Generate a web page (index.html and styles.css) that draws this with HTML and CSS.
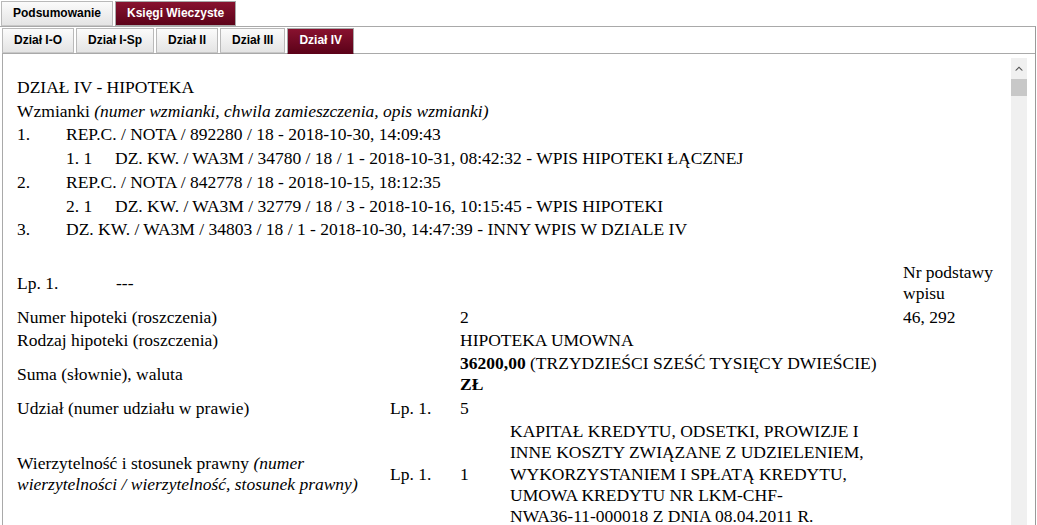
FILE: index.html
```html
<!DOCTYPE html>
<html lang="pl">
<head>
<meta charset="utf-8">
<title>Księgi Wieczyste - Dział IV</title>
<link rel="stylesheet" href="styles.css">
</head>
<body>
<div class="page">
  <div class="tabs tabs-top">
    <div class="tab">Podsumowanie</div>
    <div class="tab active">Księgi Wieczyste</div>
  </div>
  <div class="outer">
    <div class="tabs tabs-sub">
      <div class="tab">Dział I-O</div>
      <div class="tab">Dział I-Sp</div>
      <div class="tab">Dział II</div>
      <div class="tab">Dział III</div>
      <div class="tab active">Dział IV</div>
    </div>
    <div class="inner">
      <div class="content">
        <div class="row title">DZIAŁ IV - HIPOTEKA</div>
        <div class="row">Wzmianki <i>(numer wzmianki, chwila zamieszczenia, opis wzmianki)</i></div>
        <div class="wzm">
          <div class="n1">1.</div><div class="t1">REP.C. / NOTA / 892280 / 18 - 2018-10-30, 14:09:43</div>
          <div class="n2">1. 1</div><div class="t2">DZ. KW. / WA3M / 34780 / 18 / 1 - 2018-10-31, 08:42:32 - WPIS HIPOTEKI ŁĄCZNEJ</div>
          <div class="n1">2.</div><div class="t1">REP.C. / NOTA / 842778 / 18 - 2018-10-15, 18:12:35</div>
          <div class="n2">2. 1</div><div class="t2">DZ. KW. / WA3M / 32779 / 18 / 3 - 2018-10-16, 10:15:45 - WPIS HIPOTEKI</div>
          <div class="n1">3.</div><div class="t1">DZ. KW. / WA3M / 34803 / 18 / 1 - 2018-10-30, 14:47:39 - INNY WPIS W DZIALE IV</div>
        </div>

        <div class="hip">
          <div class="c-lp"><span class="lp-label">Lp. 1.</span><span>---</span></div>
          <div class="c5">Nr podstawy wpisu</div>

          <div class="c1">Numer hipoteki (roszczenia)</div>
          <div class="c34">2</div>
          <div class="c5">46, 292</div>

          <div class="c1">Rodzaj hipoteki (roszczenia)</div>
          <div class="c34">HIPOTEKA UMOWNA</div>

          <div class="c1">Suma (słownie), waluta</div>
          <div class="c34"><b>36200,00</b> (TRZYDZIEŚCI SZEŚĆ TYSIĘCY DWIEŚCIE) <b>ZŁ</b></div>

          <div class="c1">Udział (numer udziału w prawie)</div>
          <div class="c2">Lp. 1.</div>
          <div class="c34">5</div>

          <div class="c1">Wierzytelność i stosunek prawny <i>(numer wierzytelności / wierzytelność, stosunek prawny)</i></div>
          <div class="c2">Lp. 1.</div>
          <div class="c3">1</div>
          <div class="c4">KAPITAŁ KREDYTU, ODSETKI, PROWIZJE I INNE KOSZTY ZWIĄZANE Z UDZIELENIEM, WYKORZYSTANIEM I SPŁATĄ KREDYTU, UMOWA KREDYTU NR LKM-CHF-<span class="nobr">NWA36-11-000018</span> Z DNIA 08.04.2011 R.</div>
        </div>
      </div>
      <div class="scrollbar">
        <div class="sb-btn">
          <svg width="8" height="5" viewBox="0 0 8 5"><path d="M0 4.5 L4 0.5 L8 4.5 L6.5 4.5 L4 2 L1.5 4.5 Z" fill="#505050"/></svg>
        </div>
        <div class="sb-thumb"></div>
        <div class="sb-track"></div>
      </div>
    </div>
  </div>
</div>
</body>
</html>
```

FILE: styles.css
```css
html, body {
  margin: 0;
  padding: 0;
  background: #fff;
}

.page {
  width: 1037px;
  height: 525px;
  overflow: hidden;
  display: flex;
  flex-direction: column;
}

.tabs {
  display: flex;
  gap: 2px;
  font-family: "Liberation Sans", Arial, sans-serif;
  font-size: 12px;
  font-weight: bold;
}

.tabs-top {
  padding: 1px 0 0 1px;
}

.tab {
  box-sizing: border-box;
  height: 25px;
  line-height: 23px;
  padding: 0 11px;
  border: 1px solid #b9b9b9;
  border-bottom-color: #c8c8c8;
  background: linear-gradient(#fbfbfb, #e4e4e4);
  color: #000;
  white-space: nowrap;
}

.tab.active {
  background: linear-gradient(#88122f, #5c0219);
  border-color: #a8a8a8;
  color: #fff;
}

.tabs-sub .tab.active {
  height: 26px;
  margin-bottom: -1px;
  position: relative;
  z-index: 1;
  border-bottom-color: #5c0219;
}

.outer {
  flex: 1;
  display: flex;
  flex-direction: column;
  min-height: 0;
  margin-right: 1px;
  padding: 1px 0 0 2px;
  border-top: 1px solid #a9a9a9;
  border-right: 1px solid #9a9a9a;
}

.inner {
  flex: 1;
  min-height: 0;
  display: flex;
  border-top: 1px solid #a9a9a9;
  border-left: 1px solid #a9a9a9;
}

.content {
  flex: 1;
  min-width: 0;
  overflow: hidden;
  padding: 22px 0 0 14px;
  font-family: "Liberation Serif", "Times New Roman", serif;
  font-size: 17.5px;
  line-height: 21.7px;
  color: #000;
}

.row {
  padding: 1px 0;
}

.wzm {
  display: grid;
  grid-template-columns: 49px 49px 1fr;
}

.wzm > div {
  padding: 1px 0;
  white-space: nowrap;
}

.wzm .n1 { grid-column: 1; }
.wzm .t1 { grid-column: 2 / 4; }
.wzm .n2 { grid-column: 2; }
.wzm .t2 { grid-column: 3; }

.hip {
  margin-top: 19px;
  display: grid;
  grid-template-columns: 373px 70px 50px 393px 1fr;
  align-items: center;
  line-height: 21.3px;
}

.hip > div {
  padding: 1px 0;
}

.hip .c-lp {
  grid-column: 1 / 5;
  display: flex;
}

.lp-label {
  width: 99px;
}

.hip .c1 { grid-column: 1; padding-right: 20px; }
.hip .c2 { grid-column: 2; }
.hip .c3 { grid-column: 3; }
.hip .c4 { grid-column: 4; padding-right: 8px; }
.hip .c34 { grid-column: 3 / 5; padding-right: 8px; }
.hip .c5 { grid-column: 5; padding-right: 6px; }

.nobr {
  white-space: nowrap;
}

.scrollbar {
  width: 16px;
  margin: 4px 8px 0 0;
  display: flex;
  flex-direction: column;
  background: #f0f0f0;
}

.sb-btn {
  height: 21px;
  display: flex;
  align-items: center;
  justify-content: center;
}

.sb-thumb {
  height: 17px;
  background: #c8c8c8;
}

.sb-track {
  flex: 1;
}
```
